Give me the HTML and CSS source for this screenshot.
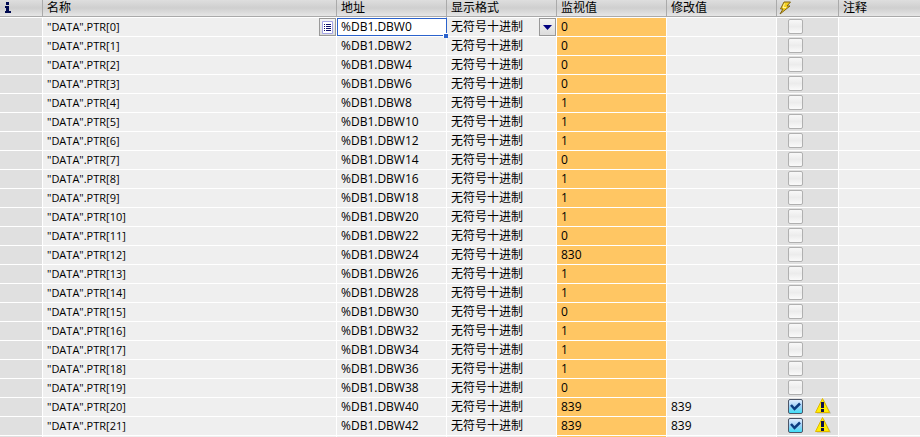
FILE: index.html
```html
<!DOCTYPE html>
<html lang="zh-CN">
<head>
<meta charset="utf-8">
<title>监控表</title>
<link rel="stylesheet" href="styles.css">
</head>
<body>
<svg class="symbols" aria-hidden="true">
  <symbol id="warning" viewBox="0 0 16 16">
    <path d="M9 2L16 15.5H2z" fill="#b5b5a8"/>
    <path d="M7.5 .5L14.5 14.500H.5z" fill="#ffee00" stroke="#e0b800"/>
    <path d="M6 4h3v6H6zM6 11h3v3H6z" fill="#10104a"/>
  </symbol>
</svg>
<table class="watch">
  <colgroup>
    <col class="col-info"><col class="col-name"><col class="col-value"><col class="col-value"><col class="col-value"><col class="col-value"><col class="col-flag"><col>
  </colgroup>
  <thead>
    <tr>
      <th class="info"><svg width="6" height="11" viewBox="0 0 6 11" role="img" aria-label="i"><path d="M1 0h3v3H1zM0 4h4v5h2v2H0V9h1V6H0z" fill="#000a50"/></svg></th>
      <th>名称</th><th>地址</th><th>显示格式</th><th>监视值</th><th>修改值</th>
      <th class="modify"><svg width="13" height="14" viewBox="0 0 13 14"><path d="M5 1H11.500L8 5H11L1 13L4 8H1.500z" fill="#f4d020" stroke="#806414"/><path d="M5.500 2.500L4 6.500h3" fill="none" stroke="#fff6a0"/></svg></th>
      <th>注释</th>
    </tr>
  </thead>
  <tbody id="rows"></tbody>
</table>
<script src="table.js"></script>
</body>
</html>
```
FILE: styles.css
```css
* { box-sizing: border-box; }

body {
  margin: 0;
  overflow: hidden;
  background: #fff;
  color: #000;
  font: 12px/18px "Open Sans", "Noto Sans CJK SC", sans-serif;
}

.symbols { position: absolute; width: 0; height: 0; }

.watch {
  width: 100%;
  table-layout: fixed;
  border-collapse: separate;
  border-spacing: 0;
}

.col-info { width: 43px; }
.col-name { width: 294px; }
.col-value { width: 110px; }
.col-flag { width: 62px; }

th {
  height: 17px;
  padding: 0 4px;
  border-right: 1px solid #aaa;
  border-bottom: 1px solid #aaa;
  background: linear-gradient(#dedede, #cfcfcf 50%, #e6e6e6);
  font-weight: 400;
  line-height: 14px;
  text-align: left;
  white-space: nowrap;
}

th svg { display: block; }
th.info { padding: 0 0 2px 5px; }
th.modify { padding: 0 2px; }

td {
  position: relative;
  height: 19px;
  padding: 0 4px;
  border-top: 1px solid #fff;
  border-right: 1px solid #fff;
  background: #efefef;
  white-space: nowrap;
}

th:last-child, td:last-child { border-right: 0; }
td.side, td.flag { background: #e0e0e0; }
td.name { font-size: 11px; }
td.monitor { background: #ffc663; }

.flag-box { display: flex; align-items: center; gap: 12px; padding: 0 0 2px 7px; }
.flag-box svg { width: 16px; height: 16px; }
.check { position: relative; display: block; width: 15px; height: 15px; }
.check input {
  appearance: none;
  display: block;
  width: 15px;
  height: 15px;
  margin: 0;
  border: 1px solid #b0b0b0;
  border-radius: 2px;
  background: linear-gradient(#f8f8f8, #ececec 50%, #fafafa);
}
.check input:checked {
  border-color: #4c5668;
  background: linear-gradient(#e0eeff, #9fd0f8 50%, #40e0f8);
}
.check svg { position: absolute; inset: 0; width: 15px; height: 15px; pointer-events: none; }

.cell-button {
  position: absolute;
  top: 0;
  right: 0;
  display: grid;
  place-items: center;
  width: 17px;
  height: 18px;
  padding: 0;
  border: 1px solid #999;
  background: linear-gradient(#f4f4f4, #dcdcdc);
}

td.selected { z-index: 1; background: #fff; padding: 0; border-right-color: #2b62cc; }
.address, .format {
  appearance: none;
  display: block;
  width: 100%;
  height: 18px;
  margin: 0;
  border: 0;
  border-radius: 0;
  padding: 0;
  outline: 0;
  background: transparent;
  color: inherit;
  font: inherit;
}
.address { padding: 0 4px; box-shadow: inset 0 1px #2b62cc, inset 0 -1px #2b62cc, inset 1px 0 #2b62cc; }
.handle {
  position: absolute;
  right: -2px;
  bottom: -2px;
  width: 5px;
  height: 5px;
  border: solid #fff;
  border-width: 1px 0 0 1px;
  background: #2b62cc;
}
```
FILE: table.js
```js
const monitored = [0, 0, 0, 0, 1, 1, 1, 0, 1, 1, 1, 0, 830, 1, 1, 0, 1, 1, 1, 0, 839, 839];
const modified = { 20: 839, 21: 839 };

const listButton = `<button class="cell-button" type="button" aria-label="选择变量">
  <svg width="11" height="13" viewBox="0 0 11 13"><path d="M.5 .5h10v12H.5z" fill="#fff" stroke="#a4a4e4"/><path d="M2 3h1v1H2zM4 3h5v1H4zM2 5h1v1H2zM4 5h5v1H4zM2 7h1v1H2zM4 7h5v1H4zM2 9h1v1H2zM4 9h5v1H4z" fill="#10106c"/></svg></button>`;
const dropButton = `<button class="cell-button" type="button" aria-label="打开列表">
  <svg width="9" height="5" viewBox="0 0 9 5"><path d="M0 0h9L4.500 5z" fill="#000080"/></svg></button>`;
const tick = `<svg viewBox="0 0 15 15"><path d="M3 6l3.500 4L12 4.500" fill="none" stroke="#0c3c80" stroke-width="2.500"/></svg>`;

document.getElementById("rows").innerHTML = monitored.map((value, i) => {
  const first = i === 0;
  const on = i in modified;
  const name = `"DATA".PTR[${i}]`;
  const address = `%DB1.DBW${i * 2}`;
  return `<tr>
    <td class="side"></td>
    <td class="name">${name}${first ? listButton : ""}</td>
    ${first
      ? `<td class="selected"><input class="address" type="text" aria-label="地址" value="${address}"><span class="handle"></span></td>
         <td><select class="format" aria-label="显示格式"><option>无符号十进制</option></select>${dropButton}</td>`
      : `<td>${address}</td><td>无符号十进制</td>`}
    <td class="monitor">${value}</td>
    <td>${modified[i] ?? ""}</td>
    <td class="flag"><div class="flag-box"><label class="check"><input type="checkbox" aria-label="修改 PTR[${i}]" ${on ? "checked" : ""}>${on ? tick : ""}</label>${on ? '<svg><use href="#warning"/></svg>' : ""}</div></td>
    <td></td>
  </tr>`;
}).join("") + '<tr><td class="side"></td><td></td><td></td><td></td><td class="monitor"></td><td></td><td class="flag"></td><td></td></tr>';
```
